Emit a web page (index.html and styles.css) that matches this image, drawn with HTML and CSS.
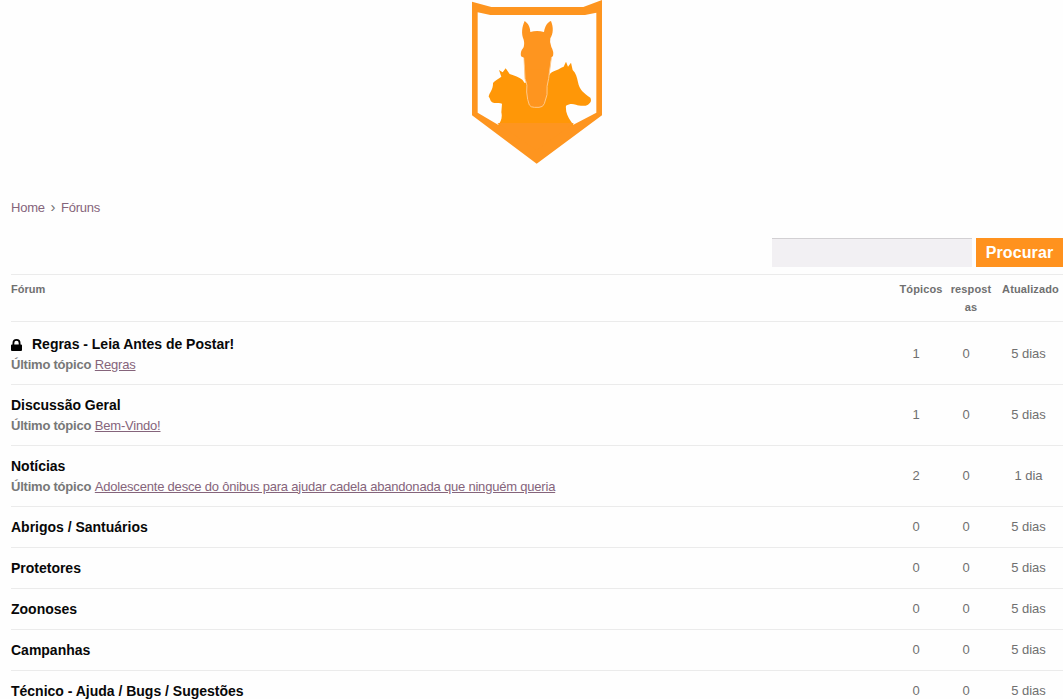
FILE: index.html
```html
<!DOCTYPE html>
<html lang="pt-BR">
<head>
<meta charset="utf-8">
<title>Fóruns</title>
<link rel="stylesheet" href="styles.css">
</head>
<body>
<header class="site-header">
<svg class="logo" viewBox="0 0 450 510" role="img" aria-label="Logo">
<path fill="#fe951f" fill-rule="evenodd" d="M30 5 L88 21 H364 L420 0 V346 L224 491 L30 346 Z M47 37 V338 L108 374 H334 L403 338 V38 L369 45 H85 Z"/>
<path fill="#ff9707" d="M108 376 C116 366 122 354 118 337 L120 311 C111 306 104 311 94 308 C83 304 86 295 80 290 C82 278 94 268 93 249 C99 240 110 237 118 230 L111 210 L122 217 L131 205 L143 222 C158 227 171 231 181 239 L188 249 L262 225 C265 219 272 215 283 211 C291 208 297 203 305 200 L312 185 L318 200 L327 188 L332 210 C342 219 345 232 348 247 C352 269 364 279 385 293 C389 302 387 307 378 314 C368 320 350 317 342 314 C330 311 321 312 312 317 C310 335 317 350 326 363 L335 376 Z"/>
<path fill="#fe951f" d="M106 369 H336 L224 451 Z"/>
<path fill="#fe951f" stroke="#ffc98a" stroke-width="3" d="M186 173 L189 236 Q198 255 194 276 Q196 301 202 315 Q206 322 217 322 H231 Q243 322 247 311 L255 284 Q253 258 260 235 L268 173 Z"/>
<path fill="#fe951f" d="M188 63 C198 70 204 79 205 96 Q225 90 246 96 C249 78 256 67 267 63 C275 83 274 100 265 115 Q262 126 268 141 Q276 155 273 168 L266 174 L260 209 H190 L187 174 L177 169 Q174 155 183 145 Q189 134 185 119 C177 101 180 80 188 63 Z"/>
</svg>
</header>
<main class="content">
<nav class="breadcrumb"><a href="#">Home</a><span class="sep">›</span><a href="#">Fóruns</a></nav>
<form class="search"><input class="search-input" type="text" aria-label="Procurar"><button class="search-button" type="button">Procurar</button></form>
<section class="forums">
<div class="row head"><span>Fórum</span><span class="count">Tópicos</span><span class="count">respostas</span><span class="count">Atualizado</span></div>
<div class="row tall first"><div class="info"><h2 class="title"><svg class="lock" viewBox="0 0 11 12"><path d="M1.500 5.500V4a4 4 0 0 1 8 0v1.500H10q1 0 1 1V11q0 1-1 1H1q-1 0-1-1V6.500q0-1 1-1Zm1.800 0h4.400V4a2.200 2.200 0 0 0-4.400 0Z"/></svg>Regras - Leia Antes de Postar!</h2><p class="latest"><b>Último tópico</b> <a href="#">Regras</a></p></div><span class="num">1</span><span class="num">0</span><span class="num">5 dias</span></div>
<div class="row tall"><div><h2 class="title">Discussão Geral</h2><p class="latest"><b>Último tópico</b> <a href="#">Bem-Vindo!</a></p></div><span class="num">1</span><span class="num">0</span><span class="num">5 dias</span></div>
<div class="row tall"><div><h2 class="title">Notícias</h2><p class="latest"><b>Último tópico</b> <a href="#">Adolescente desce do ônibus para ajudar cadela abandonada que ninguém queria</a></p></div><span class="num">2</span><span class="num">0</span><span class="num">1 dia</span></div>
<div class="row"><h2 class="title">Abrigos / Santuários</h2><span class="num">0</span><span class="num">0</span><span class="num">5 dias</span></div>
<div class="row"><h2 class="title">Protetores</h2><span class="num">0</span><span class="num">0</span><span class="num">5 dias</span></div>
<div class="row"><h2 class="title">Zoonoses</h2><span class="num">0</span><span class="num">0</span><span class="num">5 dias</span></div>
<div class="row"><h2 class="title">Campanhas</h2><span class="num">0</span><span class="num">0</span><span class="num">5 dias</span></div>
<div class="row"><h2 class="title">Técnico - Ajuda / Bugs / Sugestões</h2><span class="num">0</span><span class="num">0</span><span class="num">5 dias</span></div>
</section>
</main>
</body>
</html>
```
FILE: styles.css
```css
* { box-sizing: border-box; }
body { margin: 0; height: 699px; overflow: hidden; background: #fefefe; color: #707070; font: 13px/20px "Liberation Sans", Arial, sans-serif; }
a { color: #85647b; letter-spacing: -.2px; }
.site-header { height: 198px; padding-left: 462px; }
.logo { display: block; width: 150px; height: 170px; }
.content { padding-left: 11px; }
.breadcrumb { display: flex; height: 40px; }
.breadcrumb a { text-decoration: none; }
.sep { width: 16px; text-align: center; font-size: 15px; line-height: 18px; }
.search { display: flex; justify-content: flex-end; gap: 4px; height: 36px; margin: 0; }
.search-input { width: 200px; height: 29px; border: 0; border-top: 1px solid #d2d0d3; background: #f2f0f3; padding: 0 8px; }
.search-button { width: 87px; height: 29px; border: 0; padding: 0; background: #ff921e; color: #fff; font: bold 16px/29px "Liberation Sans", Arial, sans-serif; letter-spacing: .1px; }
.row { display: grid; grid-template-columns: 1fr 50px 50px 75px; align-items: center; height: 41px; margin-right: -3px; border-top: 1px solid #ebebeb; }
.head { grid-template-columns: 1fr 50px 50px 69px; align-items: start; height: 47px; margin-right: -2px; padding-top: 5px; font: bold 11px/18px "Liberation Sans", Arial, sans-serif; }
.count { padding: 0 3px; text-align: center; overflow-wrap: anywhere; letter-spacing: .12px; }
.tall { height: 61px; }
.first { height: 63px; }
.tall .title { line-height: 21px; }
.title { margin: 0; color: #080808; font-size: 14px; line-height: 20px; letter-spacing: -.01px; }
.lock { width: 11px; height: 12px; margin-right: 10px; vertical-align: -2px; }
.latest { margin: 0; }
.latest b { color: #777; letter-spacing: -.22px; }
.num { text-align: center; }
.first > .num { padding-top: 1px; }
.info { padding-top: 2px; }
```
